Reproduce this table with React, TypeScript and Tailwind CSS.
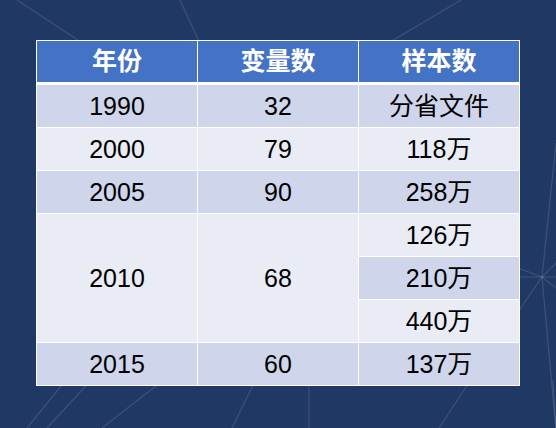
const font = "font-['Liberation_Sans','Noto_Sans_CJK_SC',sans-serif]";

const headers = ["年份", "变量数", "样本数"];

const odd = "bg-[#cfd5ea]";
const even = "bg-[#e9ebf5]";

// background decoration lines: [x1, y1, x2, y2]
const lines: [number, number, number, number][] = [
	[17, 0, 90, 48],
	[180, 0, 202, 48],
	[461, 0, 380, 48],
	[70, 375, 27, 428],
	[96, 375, 47, 428],
	[170, 375, 102, 428],
	[258, 375, 232, 428],
	[309, 375, 309, 428],
	[474, 375, 439, 428],
	[542, 277, 556, 143],
	[542, 277, 556, 430],
	[542, 277, 518, 268],
	[542, 277, 518, 277],
	[542, 277, 518, 312],
	[542, 277, 556, 263],
	[542, 277, 556, 277],
	[542, 277, 556, 288],
	[553, 380, 556, 428],
];

function Cell({ children, className = "" }: { children: React.ReactNode; className?: string }) {
	return (
		<div className={`flex items-center justify-center text-[25px] leading-none text-black ${className}`}>
			{children}
		</div>
	);
}

export default function App() {
	return (
		<div className={`relative w-[556px] h-[428px] bg-[#203864] overflow-hidden ${font}`}>
			<svg className="absolute inset-0 pointer-events-none" width="556" height="428" viewBox="0 0 556 428">
				{lines.map(([x1, y1, x2, y2], i) => (
					<line key={i} x1={x1} y1={y1} x2={x2} y2={y2} stroke="rgba(255,255,255,0.13)" strokeWidth="1.2" />
				))}
			</svg>

			<div className="relative pt-[40px] pl-[36px]">
				<div className="w-[484px] bg-white p-px flex flex-col">
					<div className="grid grid-cols-3 gap-px h-[41px]">
						{headers.map((h) => (
							<div key={h} className="bg-[#4472c4] flex items-center justify-center text-white text-[25px] font-bold leading-none">
								{h}
							</div>
						))}
					</div>

					<div className="mt-[3px] grid grid-cols-3 gap-px auto-rows-[42px]">
						<Cell className={odd}>1990</Cell>
						<Cell className={odd}>32</Cell>
						<Cell className={odd}>分省文件</Cell>

						<Cell className={even}>2000</Cell>
						<Cell className={even}>79</Cell>
						<Cell className={even}>118万</Cell>

						<Cell className={odd}>2005</Cell>
						<Cell className={odd}>90</Cell>
						<Cell className={odd}>258万</Cell>

						<Cell className={`${even} row-span-3`}>2010</Cell>
						<Cell className={`${even} row-span-3`}>68</Cell>
						<Cell className={even}>126万</Cell>
						<Cell className={odd}>210万</Cell>
						<Cell className={even}>440万</Cell>

						<Cell className={odd}>2015</Cell>
						<Cell className={odd}>60</Cell>
						<Cell className={odd}>137万</Cell>
					</div>
				</div>
			</div>
		</div>
	);
}
